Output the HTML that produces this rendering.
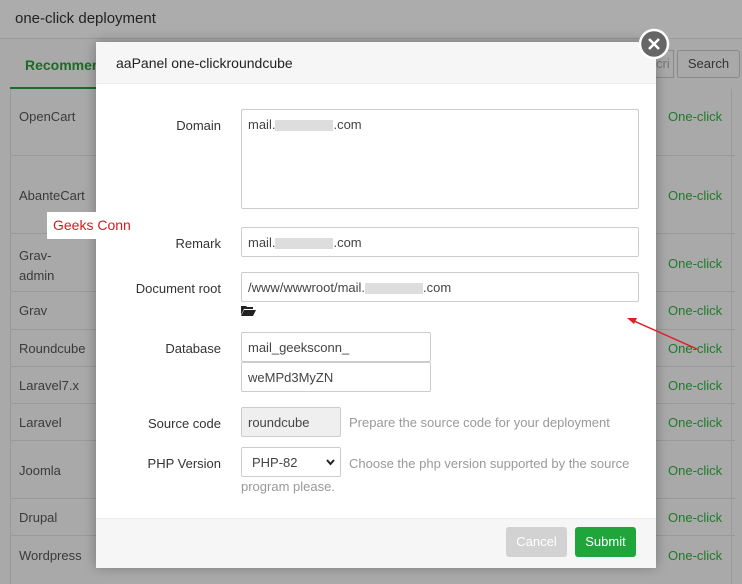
<html><head><style>
body{margin:0;width:742px;height:584px;overflow:hidden;background:#a9a9a9;font-family:"Liberation Sans",sans-serif;position:relative}
.a{position:absolute}
.t{font-size:13px;color:#3a3a3a}
.g{color:#1f7a2a;font-size:13px}
.line{position:absolute;left:10px;width:725px;height:1px;background:#999}
.m{position:absolute;left:96px;top:42px;width:560px;height:525px;background:#fff;box-shadow:0 0 12px rgba(0,0,0,.3)}
.lbl{position:absolute;width:125px;text-align:right;font-size:13px;color:#333}
.in{position:absolute;border:1px solid #ccc;border-radius:2px;box-sizing:border-box;font-size:13px;color:#444;padding:7px 6px;background:#fff;line-height:15px}
.blur{display:inline-block;width:58px;height:11px;background:#ddd;vertical-align:middle}
.hint{position:absolute;font-size:13px;color:#999}
</style></head><body>
<div class="a" style="left:0;top:0;width:742px;height:38px;background:#acacac;border-bottom:1px solid #999"></div>
<div class="a" style="left:15px;top:10px;font-size:15px;color:#222">one-click deployment</div>
<div class="a" style="left:25px;top:57px;font-size:14px;font-weight:bold;color:#1d6b27">Recommen</div>
<div class="a" style="left:10px;top:87px;width:90px;height:2px;background:#1d6b27"></div>
<div class="a" style="left:10px;top:89px;width:1px;height:495px;background:#999"></div>
<div class="a" style="left:731px;top:89px;width:1px;height:495px;background:#999"></div>
<div class="a" style="left:677px;top:50px;width:63px;height:28px;border:1px solid #8a8a8a;border-radius:3px;box-sizing:border-box;font-size:13px;color:#333;text-align:center;line-height:26px">Search</div>
<div class="a" style="left:656px;top:50px;width:18px;height:28px;border:1px solid #8a8a8a;border-left:none;box-sizing:border-box;font-size:13px;color:#777;line-height:26px">cri</div>
<div class="line" style="top:155px"></div><div class="line" style="top:233px"></div><div class="line" style="top:291px"></div><div class="line" style="top:329px"></div><div class="line" style="top:366px"></div><div class="line" style="top:403px"></div><div class="line" style="top:440px"></div><div class="line" style="top:498px"></div><div class="line" style="top:535px"></div>
<div class="a t" style="left:19px;top:109px">OpenCart</div>
<div class="a t" style="left:19px;top:188px">AbanteCart</div>
<div class="a t" style="left:19px;top:246px;line-height:20px">Grav-<br>admin</div>
<div class="a t" style="left:19px;top:303px">Grav</div>
<div class="a t" style="left:19px;top:341px">Roundcube</div>
<div class="a t" style="left:19px;top:378px">Laravel7.x</div>
<div class="a t" style="left:19px;top:415px">Laravel</div>
<div class="a t" style="left:19px;top:463px">Joomla</div>
<div class="a t" style="left:19px;top:510px">Drupal</div>
<div class="a t" style="left:19px;top:548px">Wordpress</div>
<div class="a g" style="left:668px;top:109px">One-click</div>
<div class="a g" style="left:668px;top:188px">One-click</div>
<div class="a g" style="left:668px;top:256px">One-click</div>
<div class="a g" style="left:668px;top:303px">One-click</div>
<div class="a g" style="left:668px;top:341px">One-click</div>
<div class="a g" style="left:668px;top:378px">One-click</div>
<div class="a g" style="left:668px;top:415px">One-click</div>
<div class="a g" style="left:668px;top:463px">One-click</div>
<div class="a g" style="left:668px;top:510px">One-click</div>
<div class="a g" style="left:668px;top:548px">One-click</div>
<div class="m">
<div class="a" style="left:0;top:0;width:560px;height:41px;background:#f6f6f6;border-bottom:1px solid #eee"></div>
<div class="a" style="left:20px;top:13px;font-size:14px;color:#222">aaPanel one-clickroundcube</div>
<div class="lbl" style="left:0;top:76px">Domain</div>
<div class="in" style="left:145px;top:67px;width:398px;height:100px">mail.<span class="blur"></span>.com</div>
<div class="lbl" style="left:0;top:194px">Remark</div>
<div class="in" style="left:145px;top:185px;width:398px;height:30px">mail.<span class="blur"></span>.com</div>
<div class="lbl" style="left:0;top:239px">Document root</div>
<div class="in" style="left:145px;top:230px;width:398px;height:30px">/www/wwwroot/mail.<span class="blur"></span>.com</div>
<svg class="a" style="left:145px;top:263px" width="15" height="11" viewBox="0 0 15 11"><path d="M0 1h5l1 1h6v2H3L0 10z M3 5h12l-3 6H0z" fill="#222"/></svg>
<div class="lbl" style="left:0;top:299px">Database</div>
<div class="in" style="left:145px;top:290px;width:190px;height:30px">mail_geeksconn_</div>
<div class="in" style="left:145px;top:320px;width:190px;height:30px">weMPd3MyZN</div>
<div class="lbl" style="left:0;top:374px">Source code</div>
<div class="in" style="left:145px;top:365px;width:100px;height:30px;background:#efefef">roundcube</div>
<div class="hint" style="left:253px;top:373px">Prepare the source code for your deployment</div>
<div class="lbl" style="left:0;top:414px">PHP Version</div>
<div class="in" style="left:145px;top:405px;width:100px;height:30px;padding-left:10px">PHP-82<svg class="a" style="left:84px;top:11px" width="9" height="7" viewBox="0 0 9 7"><path d="M1 1l3.5 4L8 1" stroke="#222" stroke-width="2" fill="none"/></svg></div>
<div class="hint" style="left:253px;top:414px">Choose the php version supported by the source</div>
<div class="hint" style="left:145px;top:437px">program please.</div>
<div class="a" style="left:0;top:476px;width:560px;height:49px;background:#f6f6f6;border-top:1px solid #eee"></div>
<div class="a" style="left:410px;top:485px;width:61px;height:30px;background:#d2d2d2;border-radius:3px;color:#fff;font-size:13px;text-align:center;line-height:30px">Cancel</div>
<div class="a" style="left:479px;top:485px;width:61px;height:30px;background:#20a53a;border-radius:3px;color:#fff;font-size:13px;text-align:center;line-height:30px">Submit</div>
</div>
<div class="a" style="left:47px;top:212px;width:94px;height:27px;background:#fff;color:#d21c1c;font-size:14px;line-height:27px;padding-left:6px;box-sizing:border-box;z-index:5">Geeks Conn</div>
<svg class="a" style="left:0;top:0;z-index:6" width="742" height="584"><line x1="697" y1="349" x2="634" y2="321" stroke="#e02020" stroke-width="1.5"/><path d="M627 318l10 0-3 6z" fill="#e02020"/>
<circle cx="654" cy="44" r="14" fill="#666" stroke="#fff" stroke-width="2.5"/><path d="M649 39l10 10M659 39l-10 10" stroke="#fff" stroke-width="2.5"/></svg>
</body></html>
